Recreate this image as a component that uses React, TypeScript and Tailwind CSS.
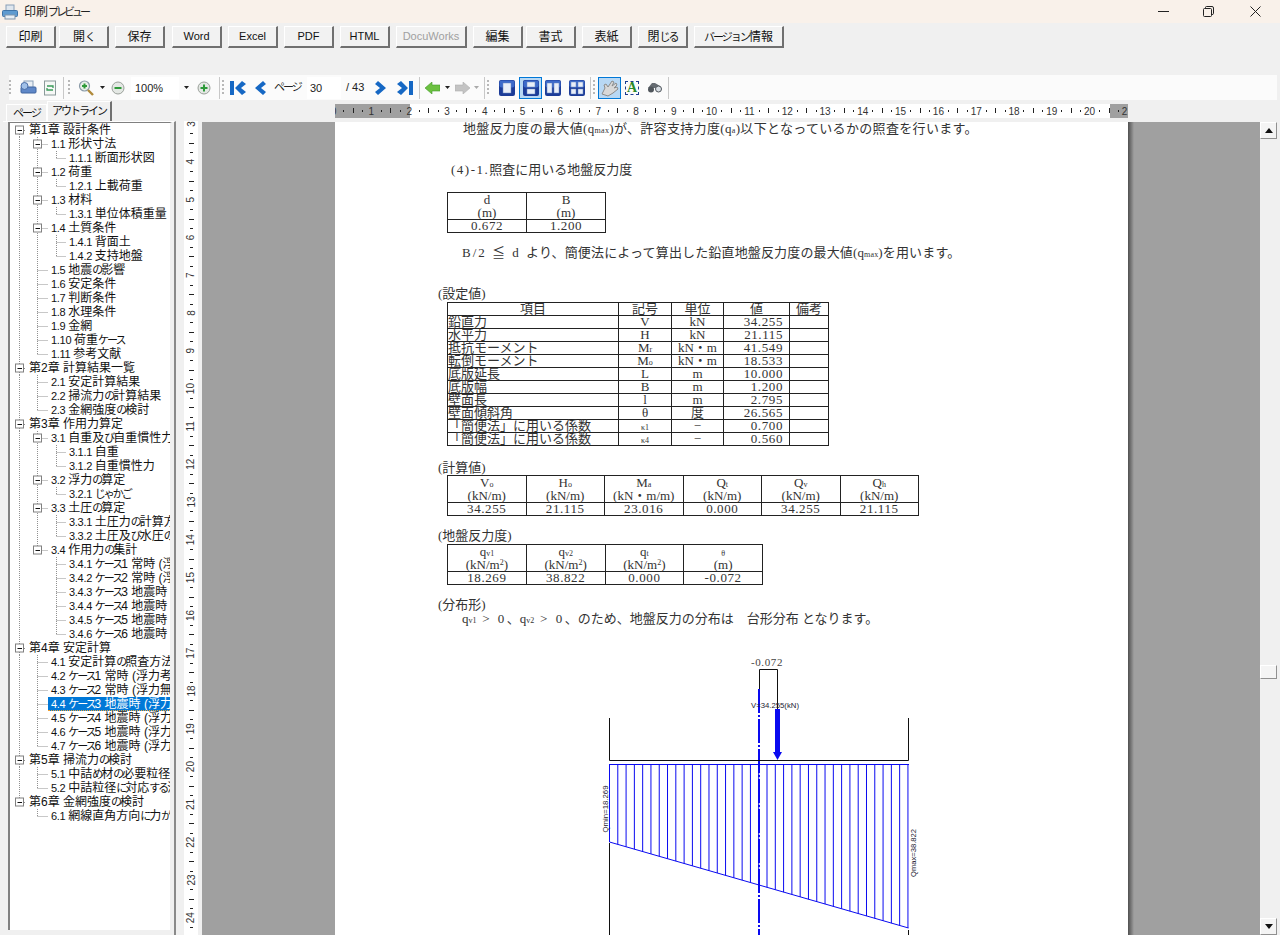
import type { ReactNode } from "react";

const uiFont = "font-['Liberation_Sans','Noto_Sans_CJK_JP',sans-serif]";
const docFont = "font-['Liberation_Serif','Noto_Sans_CJK_JP',serif]";

const buttons = [
  { label: "印刷", cls: "w-[50px] text-[12px]" },
  { label: "開く", cls: "w-[50px] ml-[3px] text-[12px]" },
  { label: "保存", cls: "w-[50px] ml-[6px] text-[12px]" },
  { label: "Word", cls: "w-[50px] ml-[7px] text-[11px]" },
  { label: "Excel", cls: "w-[50px] ml-[6px] text-[11px]" },
  { label: "PDF", cls: "w-[50px] ml-[6px] text-[11px]" },
  { label: "HTML", cls: "w-[50px] ml-[6px] text-[11px]" },
  { label: "DocuWorks", cls: "w-[71px] ml-[6px] text-[11px] text-[#a0a0a0]" },
  { label: "編集", cls: "w-[50px] ml-[6px] text-[12px]" },
  { label: "書式", cls: "w-[50px] ml-[3px] text-[12px]" },
  { label: "表紙", cls: "w-[50px] ml-[6px] text-[12px]" },
  { label: "閉じる", cls: "w-[50px] ml-[6px] text-[12px]" },
  { label: "バージョン情報", cls: "w-[90px] ml-[6px] text-[12px]" },
];

// [level, text]
const tree: [number, string][] = [
  [0, "第1章 設計条件"],
  [1, "1.1 形状寸法"],
  [2, "1.1.1 断面形状図"],
  [1, "1.2 荷重"],
  [2, "1.2.1 上載荷重"],
  [1, "1.3 材料"],
  [2, "1.3.1 単位体積重量"],
  [1, "1.4 土質条件"],
  [2, "1.4.1 背面土"],
  [2, "1.4.2 支持地盤"],
  [1, "1.5 地震の影響"],
  [1, "1.6 安定条件"],
  [1, "1.7 判断条件"],
  [1, "1.8 水理条件"],
  [1, "1.9 金網"],
  [1, "1.10 荷重ケース"],
  [1, "1.11 参考文献"],
  [0, "第2章 計算結果一覧"],
  [1, "2.1 安定計算結果"],
  [1, "2.2 掃流力の計算結果"],
  [1, "2.3 金網強度の検討"],
  [0, "第3章 作用力算定"],
  [1, "3.1 自重及び自重慣性力"],
  [2, "3.1.1 自重"],
  [2, "3.1.2 自重慣性力"],
  [1, "3.2 浮力の算定"],
  [2, "3.2.1 じゃかご"],
  [1, "3.3 土圧の算定"],
  [2, "3.3.1 土圧力の計算方法"],
  [2, "3.3.2 土圧及び水圧の集計"],
  [1, "3.4 作用力の集計"],
  [2, "3.4.1 ケース1 常時 (浮力考慮)"],
  [2, "3.4.2 ケース2 常時 (浮力無視)"],
  [2, "3.4.3 ケース3 地震時 (浮力考慮)"],
  [2, "3.4.4 ケース4 地震時 (浮力無視)"],
  [2, "3.4.5 ケース5 地震時 (浮力考慮)"],
  [2, "3.4.6 ケース6 地震時 (浮力無視)"],
  [0, "第4章 安定計算"],
  [1, "4.1 安定計算の照査方法"],
  [1, "4.2 ケース1 常時 (浮力考慮)"],
  [1, "4.3 ケース2 常時 (浮力無視)"],
  [1, "4.4 ケース3 地震時 (浮力考慮)"],
  [1, "4.5 ケース4 地震時 (浮力無視)"],
  [1, "4.6 ケース5 地震時 (浮力考慮)"],
  [1, "4.7 ケース6 地震時 (浮力無視)"],
  [0, "第5章 掃流力の検討"],
  [1, "5.1 中詰め材の必要粒径"],
  [1, "5.2 中詰粒径に対応する流速"],
  [0, "第6章 金網強度の検討"],
  [1, "6.1 網線直角方向に力が作用"],
];

// the app's UI font has narrow kana, so squeeze those runs
const Jp = ({ text, kana = "text-[11px] tracking-[-2px]" }: { text: string; kana?: string }) => (
  <>
    {text.split(/([\u3040-\u30ff]+)/).map((part, i) =>
      i % 2 === 1 ? (
        <span key={i} className={kana}>
          {part}
        </span>
      ) : (
        part
      )
    )}
  </>
);

const TreeLabel = ({ text }: { text: string }) => {
  const m = text.match(/^([\d.]+ )(.*)$/);
  if (!m) return <Jp text={text} />;
  return (
    <>
      <span className="text-[11px] tracking-[-0.3px]">{m[1]}</span>
      <Jp text={m[2]} />
    </>
  );
};

const laterSibling = (i: number, level: number) => {
  for (let j = i + 1; j < tree.length; j++) {
    if (tree[j][0] === level) return true;
    if (tree[j][0] < level) return false;
  }
  return false;
};

const TreeGuides = ({ i }: { i: number }) => {
  const level = tree[i][0];
  const hasKids = i + 1 < tree.length && tree[i + 1][0] > level;
  const width = level === 0 ? 16 : level === 1 ? 38 : 56;
  const dot = { stroke: "#909090", strokeDasharray: "1 1", strokeWidth: 1 };
  const Box = ({ x }: { x: number }) => (
    <g>
      <rect x={x - 4} y={3} width={8} height={8} fill="#fff" stroke="#808080" />
      <line x1={x - 2} x2={x + 2.5} y1={7.5} y2={7.5} stroke="#111" />
    </g>
  );
  return (
    <svg width={width} height={14} className="shrink-0 block">
      {laterSibling(i, 0) && level > 0 && <line x1={9.5} x2={9.5} y1={0} y2={14} {...dot} />}
      {level === 0 && (
        <g>
          {i > 0 && <line x1={9.5} x2={9.5} y1={0} y2={3} {...dot} />}
          {laterSibling(i, 0) && <line x1={9.5} x2={9.5} y1={11} y2={14} {...dot} />}
          <line x1={14} x2={18} y1={7.5} y2={7.5} {...dot} />
          <Box x={9.5} />
        </g>
      )}
      {level === 1 && (
        <g>
          <line x1={27.5} x2={27.5} y1={0} y2={laterSibling(i, 1) ? 14 : 7.5} {...dot} />
          <line x1={27.5} x2={38} y1={7.5} y2={7.5} {...dot} />
          {hasKids && <Box x={27.5} />}
        </g>
      )}
      {level === 2 && (
        <g>
          {laterSibling(i, 1) && <line x1={27.5} x2={27.5} y1={0} y2={14} {...dot} />}
          <line x1={46.5} x2={46.5} y1={0} y2={laterSibling(i, 2) ? 14 : 7.5} {...dot} />
          <line x1={46.5} x2={56} y1={7.5} y2={7.5} {...dot} />
        </g>
      )}
    </svg>
  );
};

const PrinterIcon = () => (
  <svg width="16" height="16" viewBox="0 0 16 16" className="block">
    <rect x="4" y="1" width="8" height="6" fill="#dfe6ee" stroke="#8aa0b8" />
    <rect x="0.5" y="6.5" width="15" height="6" rx="1" fill="#5f9bd0" stroke="#3f74a8" />
    <rect x="3" y="11" width="10" height="4" fill="#e8eef4" stroke="#7f94aa" />
  </svg>
);

const Grip = () => (
  <svg width="3" height="18" className="block shrink-0">
    {[1, 5, 9, 13].map((y) => (
      <rect key={y} x="0" y={y} width="2" height="2" fill="#b8b8b8" />
    ))}
  </svg>
);

const Sep = ({ cls }: { cls: string }) => <div className={`w-px h-[22px] bg-[#c8c8c8] shrink-0 ${cls}`} />;

const Arrow = ({ cls, gray }: { cls: string; gray?: boolean }) => (
  <svg width="5" height="3" viewBox="0 0 5 3" className={`block shrink-0 ${cls}`}>
    <polygon points="0,0 5,0 2.5,3" fill={gray ? "#aaa" : "#222"} />
  </svg>
);

const CircleBtn = ({ cls, plus }: { cls: string; plus?: boolean }) => (
  <svg width="14" height="14" viewBox="0 0 14 14" className={`block shrink-0 ${cls}`}>
    <circle cx="7" cy="7" r="6" fill="#e4e8e4" stroke="#9aa09a" />
    <rect x="3.5" y="6" width="7" height="2" fill="#2e9a3a" />
    {plus && <rect x="6" y="3.5" width="2" height="7" fill="#2e9a3a" />}
  </svg>
);

const NavIcon = ({ cls, dir, bar }: { cls: string; dir: "l" | "r"; bar?: boolean }) => (
  <svg width="16" height="14" viewBox="0 0 16 14" className={`block shrink-0 ${cls}`}>
    <g transform={dir === "r" ? "matrix(-1 0 0 1 16 0)" : undefined}>
      {bar && <rect x="0" y="0" width="4" height="14" fill="#1668c4" />}
      <polygon
        points={bar ? "12,0 5,7 12,14 16,11 11,7 16,3" : "11,0 3,7 11,14 14,11 9,7 14,3"}
        fill="#1668c4"
      />
    </g>
  </svg>
);

const ViewIcon = ({ cells }: { cells: [number, number, number, number][] }) => (
  <svg width="16" height="16" viewBox="0 0 16 16" className="block">
    <rect x="0" y="0" width="16" height="16" rx="2" fill="#1c3c98" />
    <rect x="0.5" y="0.5" width="15" height="7" rx="2" fill="#4a7ee0" opacity="0.7" />
    {cells.map(([x, y, w, h], idx) => (
      <rect key={idx} x={x} y={y} width={w} height={h} fill="#e8eef8" stroke="#6a86c0" strokeWidth="0.5" />
    ))}
  </svg>
);

const Toolbar = () => (
  <div className={`h-[25px] ml-[9px] w-[1268px] bg-[#fbfbfb] flex items-center text-[11px] ${uiFont} text-[#222]`}>
    <Grip />
    <svg width="17" height="16" viewBox="0 0 17 16" className="block ml-[8px]">
      <rect x="4" y="1" width="9" height="7" fill="#e8eef4" stroke="#8aa0b8" />
      <rect x="1" y="7" width="15" height="6" rx="1" fill="#5f88c8" stroke="#3f64a0" />
      <circle cx="4.5" cy="6" r="3.5" fill="#a0c0e8" stroke="#4a6ea8" />
    </svg>
    <svg width="14" height="16" viewBox="0 0 14 16" className="block ml-[6px]">
      <rect x="1.5" y="1" width="11" height="14" fill="#f6f8f6" stroke="#8a9a9a" />
      <path d="M4 6 h6 v2 M10 10 H4 V8" fill="none" stroke="#3a9a5a" strokeWidth="1.3" />
    </svg>
    <Sep cls="ml-[6px]" />
    <div className="ml-[4px]">
      <Grip />
    </div>
    <svg width="16" height="16" viewBox="0 0 16 16" className="block ml-[7px]">
      <circle cx="6.5" cy="6" r="5" fill="#e8f0e8" stroke="#8a9aa8" strokeWidth="1.2" />
      <rect x="4" y="5" width="5" height="2" fill="#2e9a3a" />
      <rect x="5.5" y="3.5" width="2" height="5" fill="#2e9a3a" />
      <line x1="10" y1="10" x2="15" y2="15" stroke="#b08a3a" strokeWidth="2.4" />
    </svg>
    <Arrow cls="ml-[6px]" />
    <CircleBtn cls="ml-[6px]" />
    <div className="ml-[6px] w-[48px] h-[22px] bg-white pl-[4px] leading-[22px]">100%</div>
    <Arrow cls="ml-[5px]" />
    <CircleBtn cls="ml-[8px]" plus />
    <Sep cls="ml-[8px]" />
    <div className="ml-[2px]">
      <Grip />
    </div>
    <NavIcon cls="ml-[5px]" dir="l" bar />
    <NavIcon cls="ml-[6px]" dir="l" />
    <span className="ml-[6px] w-[28px] whitespace-nowrap">
      <Jp text="ページ" />
    </span>
    <div className="ml-[5px] w-[34px] h-[22px] bg-white pl-[3px] leading-[22px]">30</div>
    <span className="ml-[5px] w-[22px] whitespace-nowrap">/ 43</span>
    <NavIcon cls="ml-[5px]" dir="r" />
    <NavIcon cls="ml-[8px]" dir="r" bar />
    <Sep cls="ml-[6px]" />
    <svg width="15" height="12" viewBox="0 0 15 12" className="block ml-[5px] shrink-0">
      <polygon points="0,6 7,0 7,3 15,3 15,9 7,9 7,12" fill="#6cc040" stroke="#3f9a2a" strokeWidth="0.6" />
    </svg>
    <Arrow cls="ml-[5px]" />
    <svg width="15" height="12" viewBox="0 0 15 12" className="block ml-[5px] shrink-0">
      <polygon points="15,6 8,0 8,3 0,3 0,9 8,9 8,12" fill="#c4c4c4" stroke="#b0b0b0" strokeWidth="0.6" />
    </svg>
    <Arrow cls="ml-[4px]" gray />
    <Sep cls="ml-[5px]" />
    <div className="ml-[2px]">
      <Grip />
    </div>
    <div className="ml-[9px] w-[16px]">
      <ViewIcon cells={[[4, 3, 8, 10]]} />
    </div>
    <div className="ml-[4px] w-[23px] h-[22px] bg-[#b8d8f4] border border-[#0078d7] flex items-center justify-center">
      <ViewIcon cells={[[4, 2, 8, 5], [4, 9, 8, 5]]} />
    </div>
    <div className="ml-[3px] w-[16px]">
      <ViewIcon cells={[[2, 3, 5, 10], [9, 3, 5, 10]]} />
    </div>
    <div className="ml-[8px] w-[16px]">
      <ViewIcon cells={[[2, 2, 5, 5], [9, 2, 5, 5], [2, 9, 5, 5], [9, 9, 5, 5]]} />
    </div>
    <Sep cls="ml-[5px]" />
    <div className="ml-[2px]">
      <Grip />
    </div>
    <div className="ml-[2px] w-[23px] h-[22px] bg-[#b8d8f4] border border-[#0078d7] flex items-center justify-center">
      <svg width="19" height="18" viewBox="0 0 19 18" className="block">
        <path
          d="M2 15 L5 9 L4 6 L6 5 L8 8 L12 2 L14 3 L12 7 L16 4 L17 6 L14 9 L17 8 L18 10 L13 14 L8 17 Z"
          fill="#d8d8d8"
          stroke="#8c8c8c"
        />
      </svg>
    </div>
    <div className="ml-[4px] w-[14px] h-[14px] border border-dashed border-[#1c3c90] flex items-center justify-center text-[14px] font-bold leading-none text-[#2a8a2a] font-['Liberation_Serif',serif]">
      A
    </div>
    <svg width="15" height="11" viewBox="0 0 15 11" className="block ml-[8px] shrink-0">
      <path d="M1 6 L5 1 H8 L13 4 V6 H6 Z" fill="#666c72" />
      <circle cx="4" cy="7.5" r="3" fill="#50565c" />
      <circle cx="11.5" cy="7" r="3" fill="#d8dee4" stroke="#50565c" />
    </svg>
    <Sep cls="ml-[6px]" />
  </div>
);

const HRuler = () => (
  <svg width="793" height="14" viewBox="335 0 793 14" className={`block ${uiFont}`}>
    <rect x="335" y="0" width="793" height="14" fill="#fff" />
    <rect x="335" y="0" width="75" height="14" fill="#a0a0a0" />
    <rect x="1110" y="0" width="18" height="14" fill="#a0a0a0" />
    {Array.from({ length: 84 }, (_, k) => {
      const x = 333.6 + k * 9.45;
      if (k % 4 === 0) return null;
      return <rect key={k} x={Math.round(x)} y={k % 4 === 2 ? 4 : 6} width="1" height={k % 4 === 2 ? 5 : 2} fill="#222" />;
    })}
    {Array.from({ length: 22 }, (_, n) => (
      <text key={n} x={333.6 + n * 37.8} y="11" textAnchor="middle" fontSize="10" fill="#333">
        {n}
      </text>
    ))}
  </svg>
);

const VRuler = () => (
  <svg width="14" height="814" viewBox="184 121 14 814" className={`block bg-white ${uiFont}`}>
    {Array.from({ length: 90 }, (_, k) => {
      const y = 86.2 + k * 9.45;
      if (k % 4 === 0) return null;
      return <rect key={k} x={k % 4 === 2 ? 189 : 190} y={Math.round(y)} width={k % 4 === 2 ? 5 : 3} height="1" fill="#222" />;
    })}
    {Array.from({ length: 23 }, (_, i) => {
      const n = i + 3;
      const y = 10.6 + n * 37.8;
      return (
        <text key={n} x="191" y={y} transform={`rotate(-90 191 ${y})`} textAnchor="middle" dominantBaseline="central" fontSize="10" fill="#333">
          {n}
        </text>
      );
    })}
  </svg>
);

const Small = ({ children }: { children: ReactNode }) => <span className="text-[8px]">{children}</span>;

const P = ({ cls, children }: { cls: string; children: ReactNode }) => (
  <div className={`h-[14px] leading-[14px] whitespace-nowrap ${cls}`}>{children}</div>
);

// fixed-height lines: mixed latin/CJK baselines would otherwise stretch the rows
const R = ({ cls = "", children }: { cls?: string; children?: ReactNode }) => (
  <div className={`h-[12px] leading-[12px] whitespace-nowrap ${cls}`}>{children}</div>
);
const H = ({ children }: { children: ReactNode }) => (
  <div className="h-[13px] leading-[13px] whitespace-nowrap">{children}</div>
);

const cell = "border border-[#222] p-0 text-center font-normal";

const settings: [string, ReactNode, ReactNode, string][] = [
  ["鉛直力", "V", "kN", "34.255"],
  ["水平力", "H", "kN", "21.115"],
  ["抵抗モーメント", <>M<Small>r</Small></>, "kN・m", "41.549"],
  ["転倒モーメント", <>M<Small>o</Small></>, "kN・m", "18.533"],
  ["底版延長", "L", "m", "10.000"],
  ["底版幅", "B", "m", "1.200"],
  ["壁面長", "l", "m", "2.795"],
  ["壁面傾斜角", "θ", "度", "26.565"],
  ["「簡便法」に用いる係数", <Small>κ1</Small>, "−", "0.700"],
  ["「簡便法」に用いる係数", <Small>κ4</Small>, "−", "0.560"],
];

const calc: [ReactNode, string, string][] = [
  [<>V<Small>o</Small></>, "(kN/m)", "34.255"],
  [<>H<Small>o</Small></>, "(kN/m)", "21.115"],
  [<>M<Small>a</Small></>, "(kN・m/m)", "23.016"],
  [<>Q<Small>t</Small></>, "(kN/m)", "0.000"],
  [<>Q<Small>v</Small></>, "(kN/m)", "34.255"],
  [<>Q<Small>h</Small></>, "(kN/m)", "21.115"],
];

const ground: [ReactNode, ReactNode, string][] = [
  [<>q<Small>v1</Small></>, <>(kN/m<sup className="text-[8px]">2</sup>)</>, "18.269"],
  [<>q<Small>v2</Small></>, <>(kN/m<sup className="text-[8px]">2</sup>)</>, "38.822"],
  [<>q<Small>t</Small></>, <>(kN/m<sup className="text-[8px]">2</sup>)</>, "0.000"],
  [<Small>θ</Small>, "(m)", "-0.072"],
];

const HeadTable = ({ rows, cls }: { rows: [ReactNode, ReactNode, string][]; cls: string }) => (
  <table className={`table-fixed border-collapse ${cls}`}>
    <tbody>
      <tr>
        {rows.map((r, i) => (
          <td key={i} className={cell}>
            <H>{r[0]}</H>
            <H>{r[1]}</H>
          </td>
        ))}
      </tr>
      <tr>
        {rows.map((r, i) => (
          <td key={i} className={cell}>
            <R cls="tracking-[0.6px]">{r[2]}</R>
          </td>
        ))}
      </tr>
    </tbody>
  </table>
);

const Diagram = () => {
  const bars = Array.from({ length: 37 }, (_, k) => 609.5 + k * 8.29);
  const blue = "#0a0af0";
  return (
    <svg width="793" height="285" viewBox="335 650 793 285" className={`block ${uiFont}`}>
      <text x="767" y="666" textAnchor="middle" fontSize="11" fill="#444" className={docFont} letterSpacing="0.6">
        -0.072
      </text>
      <path d="M759.5 709 V669.5 H777.5 V709" fill="none" stroke="#111" />
      <line x1="759" x2="759" y1="689" y2="935" stroke={blue} strokeWidth="2" strokeDasharray="24 2 2 2" />
      <line x1="777.5" x2="777.5" y1="709" y2="752" stroke={blue} strokeWidth="5" />
      <polygon points="773,752 782,752 777.5,760" fill={blue} />
      <text x="775" y="708" textAnchor="middle" fontSize="8" fill="#223" textLength="48" lengthAdjust="spacingAndGlyphs">
        V=34.255(kN)
      </text>
      <path d="M609.5 718 V760.5 H908.5 V718" fill="none" stroke="#111" />
      <line x1="609.5" x2="609.5" y1="843" y2="935" stroke="#111" />
      <line x1="908.5" x2="908.5" y1="930" y2="935" stroke="#111" />
      <line x1="609" x2="909" y1="764.5" y2="764.5" stroke={blue} />
      {bars.map((x, k) => (
        <line key={k} x1={x} x2={x} y1="764" y2={842 + ((x - 609.5) * 86) / 298.5} stroke={blue} />
      ))}
      <line x1="609.5" x2="908.5" y1="842" y2="928" stroke={blue} />
      <text x="605" y="809" transform="rotate(-90 605 809)" textAnchor="middle" dominantBaseline="central" fontSize="8" fill="#223" textLength="47" lengthAdjust="spacingAndGlyphs">
        Qmin=18.269
      </text>
      <text x="913" y="853" transform="rotate(-90 913 853)" textAnchor="middle" dominantBaseline="central" fontSize="8" fill="#223" textLength="48" lengthAdjust="spacingAndGlyphs">
        Qmax=38.822
      </text>
    </svg>
  );
};

const Page = () => (
  <div className={`w-[793px] h-[813px] bg-white shrink-0 overflow-hidden text-[13px] text-[#333] ${docFont}`}>
    <P cls="ml-[128px] tracking-[0.33px]">
      地盤反力度の最大値(q<Small>max</Small>)が、許容支持力度(q<Small>a</Small>)以下となっているかの照査を行います。
    </P>
    <P cls="mt-[27px] ml-[116px]">
      <span className="tracking-[1.5px]">(4)-1.</span>照査に用いる地盤反力度
    </P>
    <table className="table-fixed border-collapse w-[159px] mt-[15px] ml-[112px]">
      <tbody>
        <tr>
          <td className={cell}>
            <H>d</H>
            <H>(m)</H>
          </td>
          <td className={cell}>
            <H>B</H>
            <H>(m)</H>
          </td>
        </tr>
        <tr>
          <td className={cell}>
            <R cls="tracking-[0.6px]">0.672</R>
          </td>
          <td className={cell}>
            <R cls="tracking-[0.6px]">1.200</R>
          </td>
        </tr>
      </tbody>
    </table>
    <P cls="mt-[13px] ml-[127px] tracking-[0.15px]">
      <span className="tracking-[2px]">B/2 ≦ d </span>より、簡便法によって算出した鉛直地盤反力度の最大値(q<Small>max</Small>)を用います。
    </P>
    <P cls="mt-[27px] ml-[103px]">(設定値)</P>
    <table className="table-fixed border-collapse w-[381px] mt-[1px] ml-[112px]">
      <colgroup>
        <col className="w-[171px]" />
        <col className="w-[53px]" />
        <col className="w-[52px]" />
        <col className="w-[66px]" />
        <col className="w-[39px]" />
      </colgroup>
      <tbody>
        <tr>
          {["項目", "記号", "単位", "値", "備考"].map((h) => (
            <td key={h} className={cell}>
              <R>{h}</R>
            </td>
          ))}
        </tr>
        {settings.map((r, i) => (
          <tr key={i}>
            <td className={`${cell} text-left`}>
              <R>{r[0]}</R>
            </td>
            <td className={cell}>
              <R>{r[1]}</R>
            </td>
            <td className={cell}>
              <R>{r[2]}</R>
            </td>
            <td className={`${cell} text-right pr-[6px]`}>
              <R cls="tracking-[0.6px]">{r[3]}</R>
            </td>
            <td className={cell}>
              <R />
            </td>
          </tr>
        ))}
      </tbody>
    </table>
    <P cls="mt-[15px] ml-[103px]">(計算値)</P>
    <HeadTable rows={calc} cls="w-[472px] ml-[112px]" />
    <P cls="mt-[13px] ml-[103px]">(地盤反力度)</P>
    <HeadTable rows={ground} cls="w-[316px] mt-[1px] ml-[112px]" />
    <P cls="mt-[13px] ml-[103px]">(分布形)</P>
    <P cls="ml-[127px]">
      q<Small>v1</Small>
      <span className="tracking-[2.5px]"> &gt; 0</span>、q<Small>v2</Small>
      <span className="tracking-[2.5px]"> &gt; 0</span>、のため、地盤反力の分布は　台形分布 となります。
    </P>
    <div className="mt-[24px]">
      <Diagram />
    </div>
  </div>
);

const Scrollbar = () => (
  <div className="w-[17px] h-[813px] bg-[#f0f0f0] flex flex-col shrink-0">
    <div className="h-[17px] bg-[#f4f4f4] border border-[#909090] border-l-white border-t-white flex items-center justify-center">
      <svg width="8" height="5" viewBox="0 0 8 5" className="block">
        <polygon points="4,0 8,5 0,5" fill="#111" />
      </svg>
    </div>
    <div className="flex-1 flex flex-col">
      <div className="h-[526px]" />
      <div className="h-[14px] bg-[#f4f4f4] border border-[#909090] border-l-white border-t-white" />
      <div className="flex-1" />
    </div>
    <div className="h-[17px] bg-[#f4f4f4] border border-[#909090] border-l-white border-t-white flex items-center justify-center">
      <svg width="8" height="5" viewBox="0 0 8 5" className="block">
        <polygon points="0,0 8,0 4,5" fill="#111" />
      </svg>
    </div>
  </div>
);

export default function App() {
  return (
    <div className={`w-[1280px] h-[935px] overflow-hidden bg-[#f0f0f0] flex flex-col ${uiFont} text-[#111]`}>
      <div className="h-[23px] bg-[#f9f1ea] flex items-center shrink-0">
        <div className="ml-[2px] w-[22px]">
          <PrinterIcon />
        </div>
        <span className="text-[12px] text-[#222]">
          <Jp text="印刷プレビュー" kana="text-[11px] tracking-[-3px]" />
        </span>
        <div className="ml-auto flex items-center">
          <svg width="12" height="2" className="block mr-[33px]">
            <rect width="11" height="1" fill="#222" />
          </svg>
          <svg width="11" height="11" viewBox="0 0 11 11" className="block mr-[36px]">
            <rect x="0.5" y="2.5" width="8" height="8" rx="1" fill="none" stroke="#222" />
            <path d="M2.5 2 V1.5 Q2.5 .5 3.5 .5 H9 Q10.5 .5 10.5 2 V7.5 Q10.5 8.5 9 8.5" fill="none" stroke="#222" />
          </svg>
          <svg width="11" height="11" viewBox="0 0 11 11" className="block mr-[19px]">
            <path d="M.5 .5 L10.5 10.5 M10.5 .5 L.5 10.5" stroke="#222" />
          </svg>
        </div>
      </div>

      <div className="h-[52px] pt-[3px] pl-[6px] flex items-start shrink-0">
        {buttons.map((b) => (
          <button
            key={b.label}
            className={`h-[22px] bg-[#f2f2f2] border border-white border-r-2 border-b-2 border-r-[#707070] border-b-[#707070] leading-none whitespace-nowrap ${b.cls}`}
          >
            <Jp text={b.label} />
          </button>
        ))}
      </div>

      <Toolbar />

      <div className="h-[21px] flex items-start shrink-0">
        <div className="w-[335px] flex items-end h-[21px] pl-[6px] text-[12px]">
          <div className="w-[41px] h-[17px] leading-[16px] text-center border border-b-0 border-white whitespace-nowrap">
            <Jp text="ページ" />
          </div>
          <div className="w-[65px] h-[20px] leading-[18px] text-center border-t border-l border-white border-r-2 border-r-[#707070] whitespace-nowrap">
            <Jp text="アウトライン" />
          </div>
        </div>
        <div className="mt-[4px]">
          <HRuler />
        </div>
      </div>

      <div className="flex-1 flex min-h-0">
        <div className="w-[173px] ml-[3px] h-[814px] border-t border-white border-r-2 border-r-[#8a8a8a] pl-[5px] shrink-0">
          <div className="w-[164px] h-[808px] bg-white border-t border-l-2 border-r-2 border-[#808080] border-r-[#f0f0f0] overflow-hidden">
            {tree.map(([, text], i) => (
              <div key={i} className="flex h-[14px] leading-[14px] text-[12px] whitespace-nowrap text-[#111]">
                <TreeGuides i={i} />
                <span
                  className={
                    text.startsWith("4.4")
                      ? "flex-1 pl-[3px] overflow-hidden bg-[#0078d7] text-white border-b border-dotted border-[#f0a030]"
                      : "pl-[3px]"
                  }
                >
                  <TreeLabel text={text} />
                </span>
              </div>
            ))}
          </div>
        </div>
        <div className="ml-[8px] shrink-0">
          <VRuler />
        </div>
        <div className="ml-[4px] w-[1058px] h-[813px] mt-px bg-[#a0a0a0] flex shrink-0 overflow-hidden">
          <div className="w-[133px] shrink-0" />
          <Page />
          <div className="w-[6px] h-full bg-gradient-to-r from-[#505050] to-[#a0a0a0] shrink-0" />
        </div>
        <div className="mt-px">
          <Scrollbar />
        </div>
      </div>
    </div>
  );
}
